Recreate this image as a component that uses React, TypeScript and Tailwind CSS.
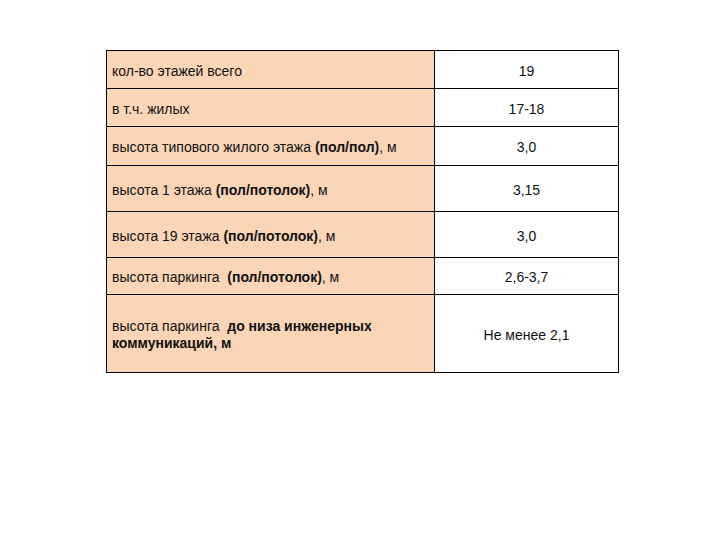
import React from "react";

const rows: { h: string; left: React.ReactNode; right: string }[] = [
  { h: "h-[38px]", left: <>кол-во этажей всего</>, right: "19" },
  { h: "h-[38px]", left: <>в т.ч. жилых</>, right: "17-18" },
  {
    h: "h-[39px]",
    left: (
      <>
        высота типового жилого этажа <b>(пол/пол)</b>, м
      </>
    ),
    right: "3,0",
  },
  {
    h: "h-[46px]",
    left: (
      <>
        высота 1 этажа <b>(пол/потолок)</b>, м
      </>
    ),
    right: "3,15",
  },
  {
    h: "h-[46px]",
    left: (
      <>
        высота 19 этажа <b>(пол/потолок)</b>, м
      </>
    ),
    right: "3,0",
  },
  {
    h: "h-[37px]",
    left: (
      <>
        высота паркинга{"\u00a0 "}<b>(пол/потолок)</b>, м
      </>
    ),
    right: "2,6-3,7",
  },
  {
    h: "h-[77px]",
    left: (
      <>
        высота паркинга{"\u00a0 "}<b>до низа инженерных</b>
        <br />
        <b>коммуникаций, м</b>
      </>
    ),
    right: "Не менее 2,1",
  },
];

export default function App() {
  return (
    <div className="w-[720px] h-[540px] bg-white text-[#111] text-[14px] leading-[17px] font-['Liberation_Sans',Arial,sans-serif] pt-[50px] pl-[106px]">
      <div className="w-[513px] border border-black flex flex-col">
        {rows.map((r, i) => (
          <div
            key={i}
            className={`flex ${r.h} ${i < rows.length - 1 ? "border-b border-black" : ""}`}
          >
            <div className="w-[328px] shrink-0 border-r border-black bg-[#fad5b6] flex items-center pl-[5px] pt-[3px] whitespace-nowrap">
              <span>{r.left}</span>
            </div>
            <div className="flex-1 flex items-center justify-center pt-[3px] whitespace-nowrap">
              {r.right}
            </div>
          </div>
        ))}
      </div>
    </div>
  );
}
